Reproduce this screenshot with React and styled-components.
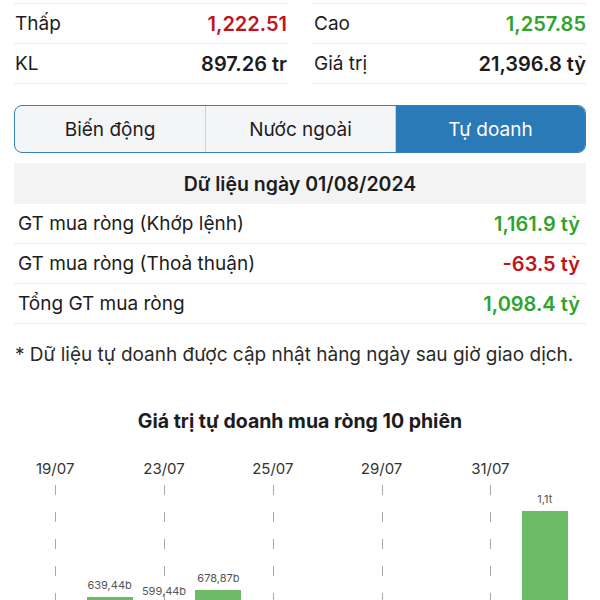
import React from 'react';
import styled, { createGlobalStyle } from 'styled-components';

const GlobalStyle = createGlobalStyle`
  body {
    margin: 0;
    background: #ffffff;
    font-family: Inter, "Noto Sans", sans-serif;
    color: #1c1c1e;
    overflow: hidden;
  }
`;

const Page = styled.div`
  padding: 3px 14px 0;
`;

const StatsGrid = styled.div`
  display: grid;
  grid-template-columns: 1fr 1fr;
  column-gap: 26px;
`;

const StatRow = styled.div`
  display: flex;
  align-items: center;
  justify-content: space-between;
  height: 39px;
  border-top: 1px solid #ececec;
  border-bottom: ${(p) => (p.last ? '1px solid #ececec' : 'none')};
  font-size: 19px;
  padding-left: 1px;
`;

const Value = styled.span`
  font-size: 20px;
  font-weight: 600;
  color: ${(p) => p.color || '#1c1c1e'};
`;

const Tabs = styled.div`
  display: grid;
  grid-template-columns: repeat(3, 1fr);
  margin-top: 21px;
  height: 46px;
  border: 1px solid #3a7fb5;
  border-radius: 8px;
  overflow: hidden;
  background: #f4f5f7;
`;

const Tab = styled.div`
  display: flex;
  align-items: center;
  justify-content: center;
  font-size: 19px;
  color: ${(p) => (p.active ? '#ffffff' : '#1c1c1e')};
  background: ${(p) => (p.active ? '#2a7ab7' : 'transparent')};
  border-left: ${(p) => (p.first ? 'none' : '1px solid #cfcfcf')};
`;

const DateHeader = styled.div`
  margin-top: 10px;
  height: 41px;
  background: #f3f3f3;
  display: flex;
  align-items: center;
  justify-content: center;
  font-size: 19.5px;
  font-weight: 600;
`;

const NetRow = styled.div`
  display: flex;
  align-items: center;
  justify-content: space-between;
  height: 39px;
  border-bottom: 1px solid #ececec;
  padding: 0 6px 0 4px;
  font-size: 19px;
`;

const Note = styled.p`
  margin: 19px 0 0;
  padding-left: 1px;
  font-size: 19px;
  line-height: 24px;
  color: #2a2a2a;
`;

const ChartTitle = styled.h3`
  margin: 42px 0 0;
  text-align: center;
  font-size: 19.5px;
  line-height: 24px;
  font-weight: 700;
`;

const Chart = styled.div`
  display: grid;
  grid-template-columns: repeat(10, 1fr);
  margin: 27px 14px 0;
  height: 242px;
`;

const Column = styled.div`
  display: flex;
  flex-direction: column;
  align-items: center;
`;

const DateLabel = styled.div`
  height: 18px;
  line-height: 18px;
  font-size: 15px;
  color: #333;
  white-space: nowrap;
`;

const Plot = styled.div`
  position: relative;
  flex: 1;
  width: 100%;
  margin-top: 7px;
  display: flex;
  flex-direction: column;
  justify-content: flex-end;
  align-items: center;
`;

const GridLine = styled.div`
  position: absolute;
  top: 0;
  bottom: 0;
  left: 50%;
  width: 1px;
  background: repeating-linear-gradient(
    to bottom,
    #a8a8a8 0,
    #a8a8a8 10px,
    transparent 10px,
    transparent 27px
  );
`;

const BarLabel = styled.div`
  position: relative;
  font-size: 11px;
  line-height: 13px;
  color: #555;
  margin-bottom: 5px;
  white-space: nowrap;
`;

const Bar = styled.div`
  position: relative;
  width: 46px;
  background: #6cbb66;
`;

const stats = [
  ['Thấp', '1,222.51', '#c0141c', 'Cao', '1,257.85', '#2da52d'],
  ['KL', '897.26 tr', null, 'Giá trị', '21,396.8 tỷ', null],
];

const netRows = [
  ['GT mua ròng (Khớp lệnh)', '1,161.9 tỷ', '#2da52d'],
  ['GT mua ròng (Thoả thuận)', '-63.5 tỷ', '#c0141c'],
  ['Tổng GT mua ròng', '1,098.4 tỷ', '#2da52d'],
];

// bars below the fold carry no label in view
const sessions = [
  { date: '19/07', value: 320 },
  { date: '22/07', value: 639.44, label: '639,44b' },
  { date: '23/07', value: 599.44, label: '599,44b' },
  { date: '24/07', value: 678.87, label: '678,87b' },
  { date: '25/07', value: 210 },
  { date: '26/07', value: 430 },
  { date: '29/07', value: 130 },
  { date: '30/07', value: 380 },
  { date: '31/07', value: 290 },
  { date: '01/08', value: 1161.9, label: '1,1t' },
];

const SCALE = 0.1645;

export default function App() {
  return (
    <Page>
      <GlobalStyle />
      <StatsGrid>
        {stats.map((s, i) => (
          <React.Fragment key={s[0]}>
            <StatRow last={i === stats.length - 1}>
              <span>{s[0]}</span>
              <Value color={s[2]}>{s[1]}</Value>
            </StatRow>
            <StatRow last={i === stats.length - 1}>
              <span>{s[3]}</span>
              <Value color={s[5]}>{s[4]}</Value>
            </StatRow>
          </React.Fragment>
        ))}
      </StatsGrid>

      <Tabs>
        <Tab first>Biến động</Tab>
        <Tab>Nước ngoài</Tab>
        <Tab active>Tự doanh</Tab>
      </Tabs>

      <DateHeader>Dữ liệu ngày 01/08/2024</DateHeader>
      {netRows.map((r) => (
        <NetRow key={r[0]}>
          <span>{r[0]}</span>
          <Value color={r[2]}>{r[1]}</Value>
        </NetRow>
      ))}

      <Note>* Dữ liệu tự doanh được cập nhật hàng ngày sau giờ giao dịch.</Note>

      <ChartTitle>Giá trị tự doanh mua ròng 10 phiên</ChartTitle>
      <Chart>
        {sessions.map((s, i) => (
          <Column key={s.date}>
            <DateLabel>{i % 2 === 0 ? s.date : '\u00a0'}</DateLabel>
            <Plot>
              {i % 2 === 0 && <GridLine />}
              {s.label && <BarLabel>{s.label}</BarLabel>}
              <Bar style={{ height: Math.round(s.value * SCALE) }} />
            </Plot>
          </Column>
        ))}
      </Chart>
    </Page>
  );
}
